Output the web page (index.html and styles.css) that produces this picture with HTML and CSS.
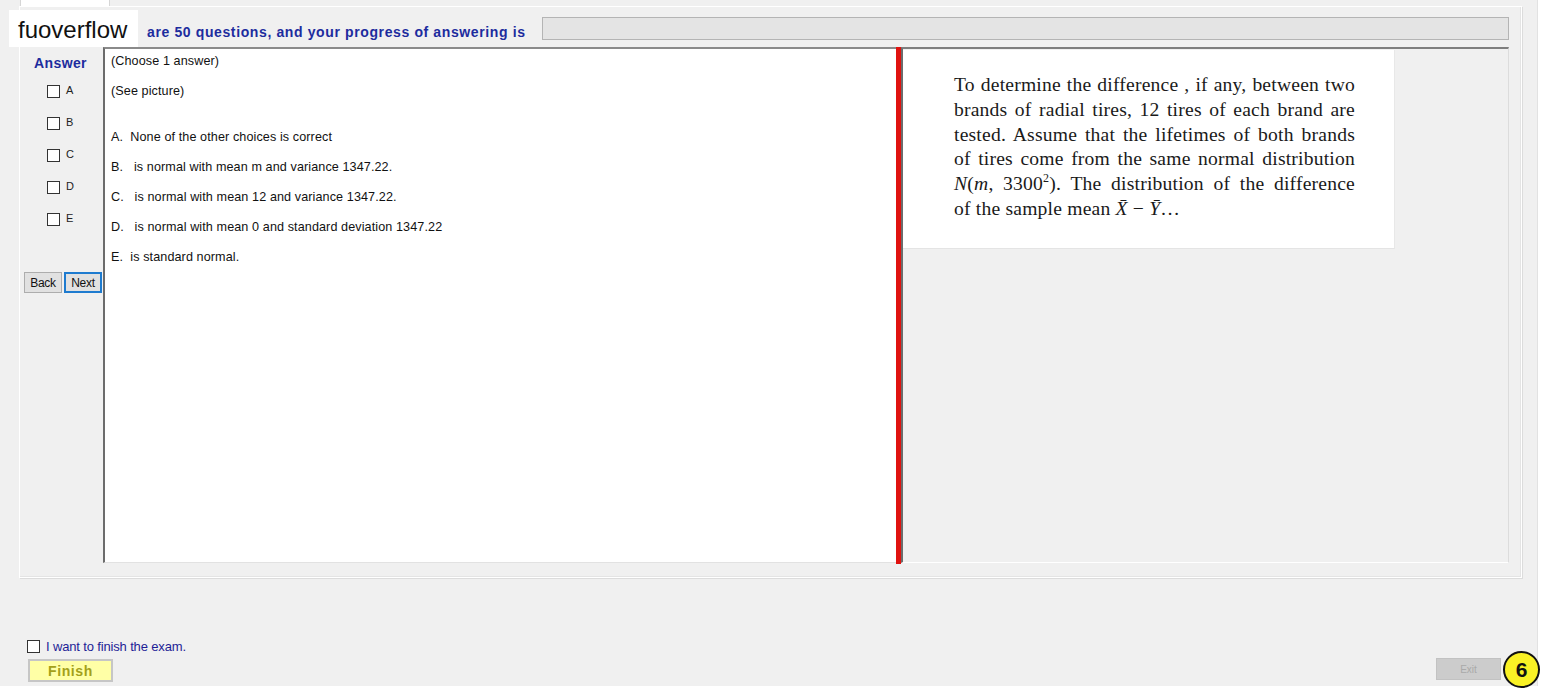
FILE: index.html
```html
<!DOCTYPE html>
<html>
<head>
<meta charset="utf-8">
<link rel="stylesheet" href="styles.css">
</head>
<body>
<div class="window">
  <div class="tab"></div>
  <div class="panel">
    <div class="header">
      <span class="header-text">are 50 questions, and your progress of answering is</span>
      <div class="progress"></div>
    </div>
    <div class="main">
      <div class="answer-col">
        <div class="answer-title">Answer</div>
        <div class="opts">
          <label class="opt"><span class="box"></span><span class="opt-letter">A</span></label>
          <label class="opt"><span class="box"></span><span class="opt-letter">B</span></label>
          <label class="opt"><span class="box"></span><span class="opt-letter">C</span></label>
          <label class="opt"><span class="box"></span><span class="opt-letter">D</span></label>
          <label class="opt"><span class="box"></span><span class="opt-letter">E</span></label>
        </div>
        <div class="nav">
          <button class="btn">Back</button>
          <button class="btn next">Next</button>
        </div>
      </div>
      <div class="question">
        <p class="q-line">(Choose 1 answer)</p>
        <p class="q-line gap">(See picture)</p>
        <p class="q-line">A.&nbsp; None of the other choices is correct</p>
        <p class="q-line">B.&nbsp;&nbsp; is normal with mean m and variance 1347.22.</p>
        <p class="q-line">C.&nbsp;&nbsp; is normal with mean 12 and variance 1347.22.</p>
        <p class="q-line">D.&nbsp;&nbsp; is normal with mean 0 and standard deviation 1347.22</p>
        <p class="q-line">E.&nbsp; is standard normal.</p>
      </div>
      <div class="splitter"></div>
      <div class="picture-pane">
        <div class="picture">
          <div class="pic-text">
            <div class="pl">To determine the difference , if any, between two</div>
            <div class="pl">brands of radial tires, 12 tires of each brand are</div>
            <div class="pl">tested. Assume that the lifetimes of both brands</div>
            <div class="pl">of tires come from the same normal distribution</div>
            <div class="pl"><i>N</i>(<i>m</i>, 3300<sup>2</sup>). The distribution of the difference</div>
            <div class="pl last">of the sample mean <i>X&#772;</i> &minus; <i>Y&#772;</i>&hellip;</div>
          </div>
        </div>
      </div>
    </div>
  </div>
  <div class="footer">
    <label class="finish-check"><span class="box"></span><span class="finish-label">I want to finish the exam.</span></label>
    <div class="bottom-row">
      <button class="finish-btn">Finish</button>
      <button class="exit-btn">Exit</button>
    </div>
  </div>
  <div class="watermark">fuoverflow</div>
</div>
<div class="badge">6</div>
</body>
</html>
```

FILE: styles.css
```css
html, body {
  margin: 0;
  padding: 0;
  background: #ffffff;
}

body {
  font-family: "Liberation Sans", Arial, sans-serif;
}

.window {
  position: relative;
  width: 1538px;
  height: 686px;
  background: #f0f0f0;
  overflow: hidden;
  border-right: 1px solid #e2e2e2;
  box-sizing: border-box;
}

.tab {
  margin-left: 20px;
  width: 90px;
  height: 6px;
  background: #ffffff;
  border-right: 1px solid #d6d6d6;
  border-left: 1px solid #d6d6d6;
  box-sizing: border-box;
}

.panel {
  margin-left: 19px;
  width: 1503px;
  height: 572px;
  box-sizing: border-box;
  border: 1px solid #ffffff;
  box-shadow: inset -1px -1px 0 #e4e4e4, 1px 1px 0 #dcdcdc;
  display: flex;
  flex-direction: column;
}

.header {
  display: flex;
  align-items: center;
  height: 23px;
  margin-top: 10px;
  padding-left: 127px;
  padding-right: 12px;
}

.header-text {
  font-weight: bold;
  font-size: 14px;
  letter-spacing: 0.62px;
  color: #1d2c9e;
  margin-top: 6px;
  white-space: nowrap;
}

.progress {
  flex: 1;
  height: 23px;
  margin-left: 16px;
  background: #e4e4e4;
  border: 1px solid #b4b4b4;
  box-sizing: border-box;
}

.main {
  display: flex;
  height: 516px;
  margin-top: 7px;
  padding-left: 3px;
  padding-right: 12px;
}

.answer-col {
  width: 80px;
  flex: none;
  display: flex;
  flex-direction: column;
}

.answer-title {
  margin-top: 8px;
  margin-left: 11px;
  height: 16px;
  line-height: 16px;
  font-weight: bold;
  font-size: 14px;
  letter-spacing: 0.4px;
  color: #1d2c9e;
}

.opts {
  margin-top: 14px;
  display: flex;
  flex-direction: column;
  gap: 19px;
  padding-left: 24px;
}

.opt {
  display: flex;
  align-items: flex-start;
  height: 13px;
  gap: 6px;
}

.box {
  display: block;
  width: 13px;
  height: 13px;
  box-sizing: border-box;
  border: 1px solid #333333;
  background: #ffffff;
  flex: none;
}

.opt-letter {
  font-size: 11px;
  line-height: 11px;
  color: #222;
}

.nav {
  margin-top: 46px;
  margin-left: 1px;
  display: flex;
  gap: 2px;
}

.btn {
  width: 38px;
  height: 21px;
  padding: 0;
  font-family: "Liberation Sans", Arial, sans-serif;
  font-size: 12px;
  letter-spacing: -0.3px;
  color: #111;
  background: #e1e1e1;
  border: 1px solid #adadad;
  box-sizing: border-box;
}

.btn.next {
  border: 2px solid #1e7bcf;
}

.question {
  width: 793px;
  flex: none;
  background: #ffffff;
  border-left: 2px solid #6c6c6c;
  border-top: 2px solid #8a8a8a;
  border-bottom: 1px solid #e2e2e2;
  box-sizing: border-box;
  padding: 4px 0 0 6px;
}

.q-line {
  margin: 0 0 14px 0;
  font-size: 12.6px;
  letter-spacing: 0.1px;
  line-height: 16px;
  color: #111;
  white-space: nowrap;
}

.q-line.gap {
  margin-bottom: 30px;
}

.splitter {
  width: 5px;
  flex: none;
  background: #e0120f;
  margin-bottom: -1px;
}

.picture-pane {
  flex: 1;
  background: #f0f0f0;
  border-top: 2px solid #7e7e7e;
  border-left: 2px solid #6c6c6c;
  border-right: 1px solid #dcdcdc;
  border-bottom: 1px solid #ffffff;
  box-sizing: border-box;
}

.picture {
  margin-top: 1px;
  width: 492px;
  height: 199px;
  background: #ffffff;
  border-bottom: 1px solid #e4e4e4;
  border-right: 1px solid #e8e8e8;
  box-sizing: border-box;
  padding: 23px 0 0 51px;
}

.pic-text {
  width: 401px;
  font-family: "Liberation Serif", "Times New Roman", serif;
  font-size: 19.6px;
  letter-spacing: 0.2px;
  line-height: 24.8px;
  color: #1a1a1a;
}

.pl {
  text-align: justify;
  text-align-last: justify;
  white-space: nowrap;
  height: 24.8px;
}

.pl.last {
  text-align: left;
  text-align-last: left;
}

.pl sup {
  font-size: 12px;
  line-height: 0;
}

.footer {
  margin-top: 62px;
  display: flex;
  flex-direction: column;
}

.finish-check {
  display: flex;
  align-items: center;
  margin-left: 27px;
  gap: 6px;
  height: 13px;
}

.finish-label {
  font-size: 13px;
  color: #1e1e96;
  letter-spacing: -0.15px;
}

.bottom-row {
  display: flex;
  justify-content: space-between;
  align-items: flex-start;
  margin-top: 5px;
  padding-left: 28px;
  padding-right: 36px;
}

.finish-btn {
  width: 85px;
  height: 23px;
  margin-top: 1px;
  padding: 0;
  background: #ffffa6;
  border: 2px solid #c6c6c6;
  box-sizing: border-box;
  font-family: "Liberation Sans", Arial, sans-serif;
  font-weight: bold;
  font-size: 14px;
  letter-spacing: 0.6px;
  color: #a3a01a;
}

.exit-btn {
  width: 65px;
  height: 22px;
  padding: 0;
  background: #cccccc;
  border: 1px solid #c2c2c2;
  box-sizing: border-box;
  font-family: "Liberation Sans", Arial, sans-serif;
  font-size: 10px;
  color: #a9a9a9;
}

.badge {
  position: absolute;
  left: 1503px;
  top: 651px;
  width: 37px;
  height: 37px;
  box-sizing: border-box;
  border: 2px solid #111;
  border-radius: 50%;
  background: #f9f125;
  display: flex;
  align-items: center;
  justify-content: center;
  font-family: "Liberation Sans", Arial, sans-serif;
  font-weight: bold;
  font-size: 21px;
  color: #111;
}

.watermark {
  position: absolute;
  left: 9px;
  top: 10px;
  width: 129px;
  height: 37px;
  background: #ffffff;
  box-sizing: border-box;
  padding-left: 9px;
  font-family: "Liberation Sans", Arial, sans-serif;
  font-size: 24px;
  line-height: 40px;
  color: #111;
}
```
